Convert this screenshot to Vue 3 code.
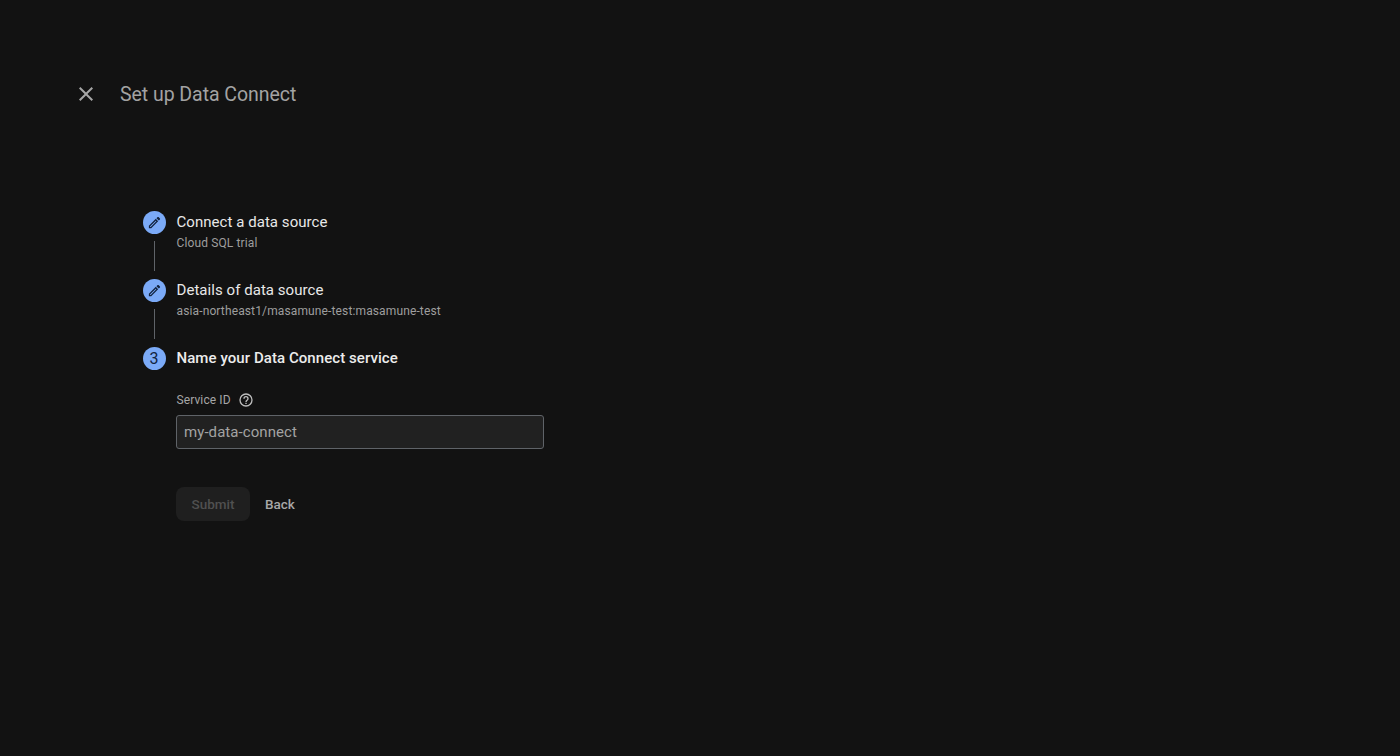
<script setup>
const pencil = 'M14.06 9.02l.92.92L5.92 19H5v-.92l9.06-9.06M17.66 3c-.25 0-.51.1-.7.29l-1.83 1.83 3.75 3.75 1.83-1.83c.39-.39.39-1.02 0-1.41l-2.34-2.34c-.2-.2-.45-.29-.71-.29zm-3.6 3.19L3 17.25V21h3.75L17.81 9.94l-3.75-3.75z'
const done = [
  { title: 'Connect a data source', sub: 'Cloud SQL trial' },
  { title: 'Details of data source', sub: 'asia-northeast1/masamune-test:masamune-test' }
]
</script>

<template>
  <div class="page">
    <header class="head">
      <svg class="close" width="24" height="24" viewBox="0 0 24 24" fill="#a6a6a6"><path d="M19 6.41 17.59 5 12 10.59 6.41 5 5 6.41 10.59 12 5 17.59 6.41 19 12 13.41 17.59 19 19 17.59 13.41 12z"/></svg>
      <h1 class="title">Set up Data Connect</h1>
    </header>
    <main class="steps">
      <section v-for="s in done" :key="s.title" class="step">
        <div class="rail">
          <span class="dot"><svg width="15" height="15" viewBox="0 0 24 24" fill="#12233f"><path :d="pencil"/></svg></span>
          <span class="line"></span>
        </div>
        <div class="text">
          <div class="step-title">{{ s.title }}</div>
          <div class="sub">{{ s.sub }}</div>
        </div>
      </section>
      <section class="step current">
        <div class="rail"><span class="dot num">3</span></div>
        <div class="text grow">
          <div class="step-title strong">Name your Data Connect service</div>
          <div class="label-row">
            <label class="label" for="sid">Service ID</label>
            <svg width="16" height="16" viewBox="0 0 24 24" fill="#bdbdbd"><path d="M11 18h2v-2h-2v2zm1-16a10 10 0 1 0 0 20 10 10 0 0 0 0-20zm0 18a8 8 0 1 1 0-16 8 8 0 0 1 0 16zm0-14a4 4 0 0 0-4 4h2a2 2 0 1 1 4 0c0 2-3 1.75-3 5h2c0-2.25 3-2.5 3-5a4 4 0 0 0-4-4z"/></svg>
          </div>
          <input id="sid" class="input" value="my-data-connect" />
          <div class="actions">
            <button class="btn submit" disabled>Submit</button>
            <button class="btn back">Back</button>
          </div>
        </div>
      </section>
    </main>
  </div>
</template>

<style>
html, body { margin: 0; background: #121212; }
</style>

<style scoped>
.page { height: 756px; box-sizing: border-box; padding: 82px 0 0 74px; background: #121212; font-family: Roboto, "Liberation Sans", sans-serif; overflow: hidden; }
.head { display: flex; align-items: center; height: 24px; gap: 22px; }
.close { flex: none; }
.title { margin: 0; padding-top: 2px; font-size: 19.5px; line-height: 24px; font-weight: 400; color: #a3a3a3; letter-spacing: -0.05px; }
.steps { margin: 105px 0 0 68px; width: 402px; }
.step { display: flex; gap: 10px; height: 68px; }
.step.current { height: auto; }
.rail { width: 24px; display: flex; flex-direction: column; align-items: center; flex: none; }
.dot { width: 23px; height: 23px; border-radius: 50%; background: #7baaf7; color: #12233f; display: flex; align-items: center; justify-content: center; flex: none; }
.num { font-size: 16px; line-height: 23px; }
.line { width: 1px; height: 30px; margin: 7px 0 0 1px; background: #5f6368; }
.text { min-width: 0; }
.grow { flex: 1; }
.step-title { font-size: 15px; line-height: 23px; color: #e8e8e8; letter-spacing: 0.05px; padding-left: 0.5px; }
.strong { font-weight: 500; color: #ececec; letter-spacing: 0.07px; }
.sub { margin-top: 1px; padding-left: 0.5px; font-size: 12px; line-height: 16px; color: #9e9e9e; letter-spacing: 0.13px; white-space: nowrap; }
.label-row { display: flex; align-items: center; gap: 7px; height: 16px; margin-top: 22px; padding-left: 0.5px; }
.label { font-size: 12px; line-height: 16px; color: #a6a6a6; letter-spacing: 0.1px; }
.input { display: block; width: 100%; box-sizing: border-box; height: 34px; margin-top: 7px; padding: 0 7px; background: #212121; border: 1px solid #5f6368; border-radius: 3px; color: #a3a3a3; font: 400 15px Roboto, "Liberation Sans", sans-serif; letter-spacing: 0.07px; outline: none; }
.actions { display: flex; align-items: center; gap: 15px; margin-top: 38px; }
.btn { height: 34px; border: 0; font: 500 13.5px Roboto, "Liberation Sans", sans-serif; letter-spacing: 0; border-radius: 8px; padding: 0; background: transparent; }
.submit { width: 74px; background: #1f1f1f; color: #505050; }
.back { color: #a8a8a8; }
</style>
